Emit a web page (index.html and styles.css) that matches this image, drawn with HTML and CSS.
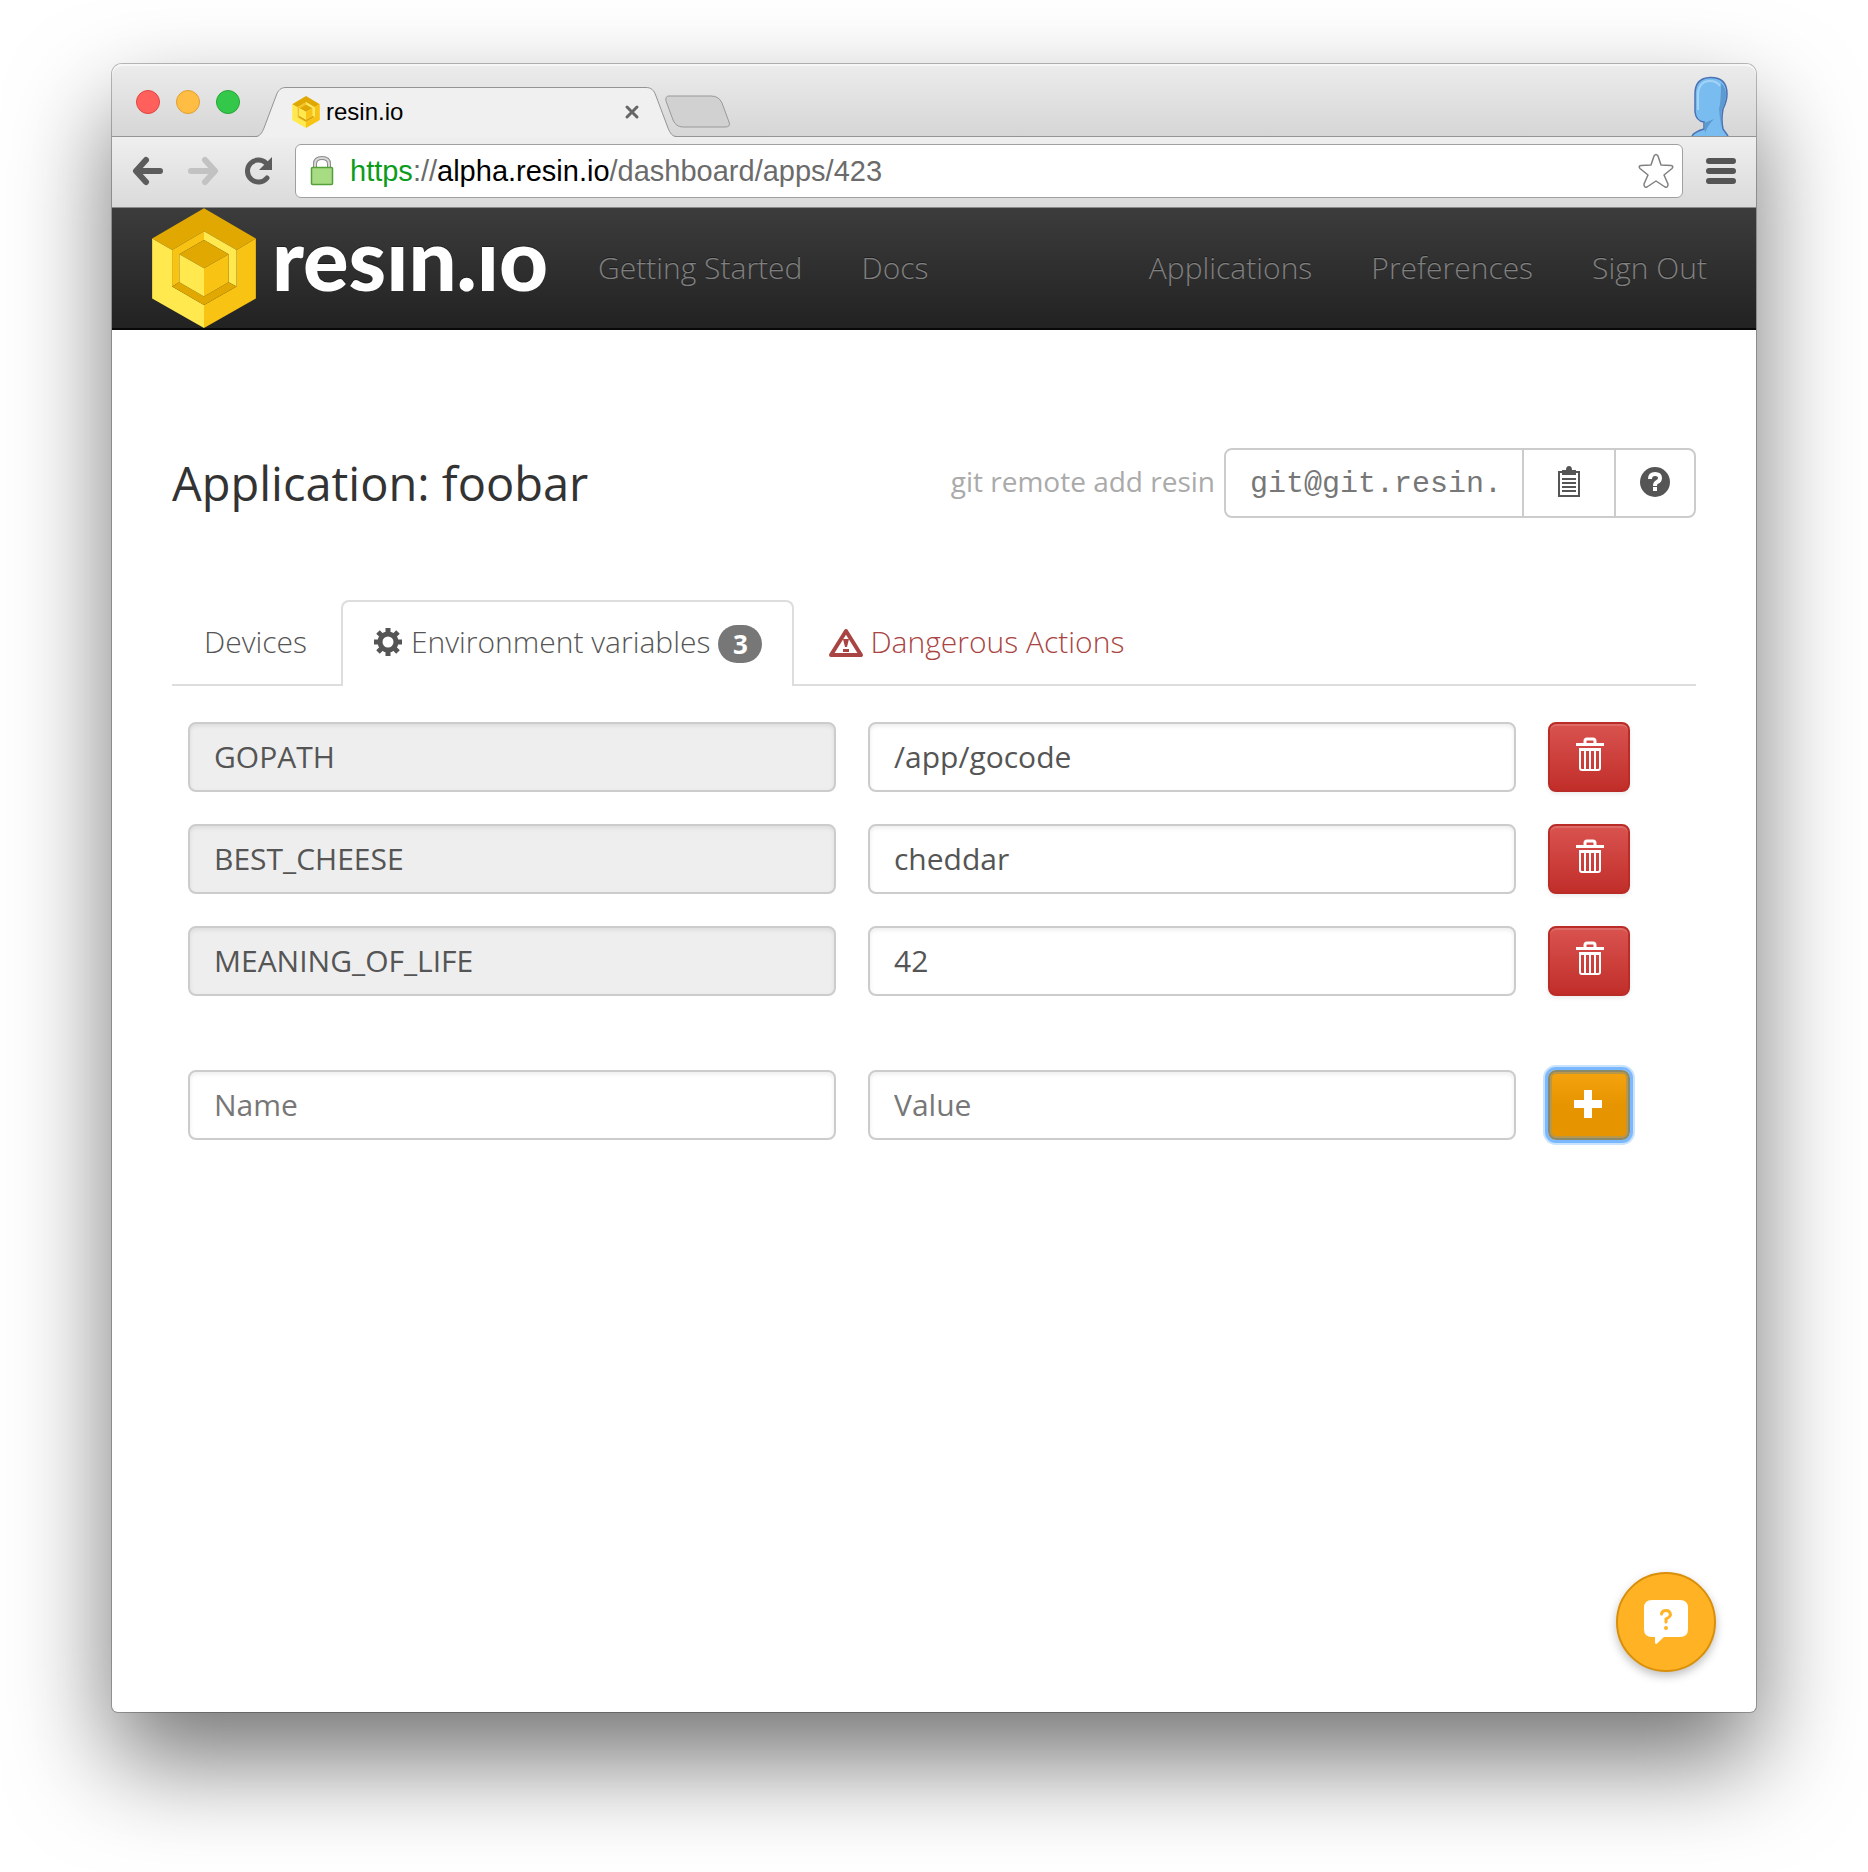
FILE: index.html
```html
<!DOCTYPE html>
<html lang="en">
<head>
<meta charset="utf-8">
<title>resin.io</title>
<link rel="stylesheet" href="styles.css">
</head>
<body>
<svg class="sprite" aria-hidden="true">
  <symbol id="cube" viewBox="156 473 312 361">
    <path fill="#e0a800" d="M156 565 312 474 468 565 410 599 312 543 216 599z"/>
    <path fill="#ffe94f" d="M156 565 216 599V709L312 765V834L156 745z"/>
    <path fill="#f9c313" d="M468 565 410 599V709L312 765V834L468 745z"/>
    <path fill="#f9c313" d="M312 543V569L238 612V696L216 709V599z"/>
    <path fill="#ffe94f" d="M312 543 410 599V709L386 696V612L312 569z"/>
    <path fill="#e0a800" d="M216 709 238 696 312 739 386 696 410 709 312 765zM312 569 386 612 312 654 238 612z"/>
    <path fill="#ffe94f" d="M238 612 312 654V739L238 696z"/>
    <path fill="#f9c313" d="M386 612 312 654V739L386 696z"/>
  </symbol>
  <symbol id="trash" viewBox="0 0 28 36">
    <path fill="none" stroke="currentColor" stroke-width="3" d="M9 7V5Q9 3 11 3H17Q19 3 19 5V7"/>
    <path fill="none" stroke="currentColor" stroke-width="2" d="M4 13V32Q4 34 6 34H22Q24 34 24 32V13z"/>
    <path fill="currentColor" d="M0 7H28V10H0zM3 12H25V15H3zM8 14H10V33H8zM13 14H15V33H13zM18 14H20V33H18z"/>
  </symbol>
</svg>

<div class="window">
  <div class="tabstrip">
    <div class="lights"><i class="light red"></i><i class="light amber"></i><i class="light green"></i></div>
    <div class="tab">
      <svg class="cap" viewBox="0 0 30 50"><path fill="#f0f0f0" d="M0 50C4 49 6 46 8 41L20 9C22 3 25 .5 30 .5V50z"/><path fill="none" stroke="#949494" d="M0 49.500C4 49 6 46 8 41L20 9C22 3 25 .5 30 .5"/></svg>
      <div class="tab-body">
        <svg class="favicon"><use href="#cube"/></svg>
        <span class="tab-title">resin.io</span>
        <button class="plain" aria-label="Close tab"><svg width="16" height="16" viewBox="0 0 16 16"><path stroke="#666" stroke-width="3" stroke-linecap="round" d="M3 3 13 13M13 3 3 13"/></svg></button>
      </div>
      <svg class="cap" viewBox="0 0 30 50"><path fill="#f0f0f0" d="M30 50C26 49 24 46 22 41L10 9C8 3 5 .5 0 .5V50z"/><path fill="none" stroke="#949494" d="M30 49.500C26 49 24 46 22 41L10 9C8 3 5 .5 0 .5"/></svg>
    </div>
    <button class="plain newtab" aria-label="New tab"><svg width="66" height="34" viewBox="0 0 66 34"><path fill="#d1d1d1" stroke="#999" d="M4 1H46Q54 1 57 8L64 27Q66 32 60 32H18Q11 32 8 25L1 6Q0 1 4 1z"/></svg></button>
    <svg class="avatar" viewBox="0 0 40 60"><path fill="#79bdf0" stroke="#4a72b4" stroke-width="1.500" d="M2 60Q4 56 14 53V46Q6 45 5 36V18Q5 2 20 1.500Q37 1 37 18Q37 25 33 33Q31 44 33 53L38 60"/><path fill="#5d9ad0" d="M31 7Q36 12 36 19Q36 26 32 33Q30 42 31 53L29 33Q31 26 31 7zM14 47 24 43Q18 49 15 57z"/><path fill="none" stroke="#a3d3f7" stroke-width="2" d="M8 34V18Q9 5 20 5Q27 5 30 10"/></svg>
  </div>

  <div class="toolbar">
    <button class="plain" aria-label="Back"><svg width="32" height="30" viewBox="0 0 32 30"><path fill="none" stroke="#5c5c5c" stroke-width="6" stroke-linecap="round" stroke-linejoin="round" d="M14 4 4 15 14 26M5 15H28"/></svg></button>
    <button class="plain" aria-label="Forward"><svg width="32" height="30" viewBox="0 0 32 30"><path fill="none" stroke="#c2c2c2" stroke-width="6" stroke-linecap="round" stroke-linejoin="round" d="M18 4 28 15 18 26M27 15H4"/></svg></button>
    <button class="plain" aria-label="Reload"><svg width="30" height="30" viewBox="0 0 30 30"><path fill="none" stroke="#5c5c5c" stroke-width="5" stroke-linecap="round" d="M25 22A11 11 0 1 1 24 7"/><path fill="#5c5c5c" d="M30 1V14H17z"/></svg></button>
    <div class="address">
      <svg width="24" height="32" viewBox="0 0 24 32"><path fill="none" stroke="#8b8b8b" stroke-width="4" d="M5 14V9Q5 3 12 3T19 9V14"/><path fill="none" stroke="#d8d8d8" stroke-width="2" d="M5 14V9Q5 3 12 3T19 9V14"/><rect x="1.500" y="12.500" width="21" height="17" rx="1" fill="#a8dc84" stroke="#55a03a" stroke-width="1.500"/></svg>
      <span class="url"><span class="scheme">https</span>://<span class="host">alpha.resin.io</span>/dashboard/apps/423</span>
      <button class="plain" aria-label="Bookmark"><svg width="36" height="36" viewBox="0 0 36 36"><path fill="#fff" stroke="#808080" stroke-width="1.500" stroke-linejoin="round" d="M16 3Q18 0 20 3L23 12 33 12.500Q36 13 34 15.500L26 22 30 31Q30 35 27 34L18 28 9 34Q6 35 6 31L10 22 2 15.500Q0 13 3 12.500L13 12z"/></svg></button>
    </div>
    <button class="plain" aria-label="Menu"><svg width="30" height="28" viewBox="0 0 30 28"><path stroke="#555" stroke-width="6" stroke-linecap="round" d="M3 4H27M3 14H27M3 24H27"/></svg></button>
  </div>

  <nav class="navbar">
    <a class="brand" href="#"><svg class="brand-mark"><use href="#cube"/></svg><span class="brand-name">resın.ıo</span></a>
    <a href="#">Getting Started</a>
    <a href="#">Docs</a>
    <a class="push" href="#">Applications</a>
    <a href="#">Preferences</a>
    <a href="#">Sign Out</a>
  </nav>

  <main class="content">
    <header class="page-head">
      <h1>Application: foobar</h1>
      <div class="remote">
        <label for="remote">git remote add resin</label>
        <div class="group">
          <input id="remote" class="remote-input" value="git@git.resin." readonly>
          <button class="addon copy" aria-label="Copy"><svg width="24" height="32" viewBox="0 0 24 32"><path fill="none" stroke="#555" stroke-width="2" d="M2 6H22V30H2z"/><path fill="#555" d="M5 4H9Q9 0 12 0T15 4H19V9H5z"/><path stroke="#555" stroke-width="2" d="M5 13H19M5 17H19M5 21H19M5 25H19"/></svg></button>
          <button class="addon help" aria-label="Help"><svg width="30" height="30" viewBox="0 0 30 30"><circle cx="15" cy="15" r="15" fill="#555"/><path fill="none" stroke="#fff" stroke-width="4" d="M10 12Q10 7 15 7T20 11Q20 14 17 15Q15 16 15 19"/><path fill="#fff" d="M13 20H17V24H13z"/></svg></button>
        </div>
      </div>
    </header>

    <div class="tabs">
      <a href="#">Devices</a>
      <a class="active" href="#"><svg class="gear" viewBox="-15 -15 30 30"><path fill="none" stroke="#555" stroke-width="5" d="M0-14V14M-14 0H14M-10-10 10 10M10-10-10 10"/><circle r="8" fill="#fff" stroke="#555" stroke-width="5"/></svg>Environment variables<span class="badge">3</span></a>
      <a class="danger" href="#"><svg class="warn" viewBox="0 0 36 30"><path fill="none" stroke="#a94442" stroke-width="4" stroke-linejoin="round" d="M18 4 33 28H3z"/><path fill="#a94442" d="M15 12H21L19 20H17zM15 22H21V25H15z"/></svg>Dangerous Actions</a>
    </div>

    <form class="vars">
      <input class="field" aria-label="Variable name" value="GOPATH" disabled>
      <input class="field" aria-label="Variable value" value="/app/gocode">
      <button type="button" class="btn remove" aria-label="Delete"><svg width="28" height="36"><use href="#trash"/></svg></button>
      <input class="field" aria-label="Variable name" value="BEST_CHEESE" disabled>
      <input class="field" aria-label="Variable value" value="cheddar">
      <button type="button" class="btn remove" aria-label="Delete"><svg width="28" height="36"><use href="#trash"/></svg></button>
      <input class="field" aria-label="Variable name" value="MEANING_OF_LIFE" disabled>
      <input class="field" aria-label="Variable value" value="42">
      <button type="button" class="btn remove" aria-label="Delete"><svg width="28" height="36"><use href="#trash"/></svg></button>
    </form>
    <form class="vars new">
      <input class="field" aria-label="Name" placeholder="Name">
      <input class="field" aria-label="Value" placeholder="Value">
      <button type="button" class="btn add" aria-label="Add"><svg width="28" height="28" viewBox="0 0 28 28"><path fill="#fff" d="M10 0H18V10H28V18H18V28H10V18H0V10H10z"/></svg></button>
    </form>
  </main>

  <button class="chat" aria-label="Support"><svg width="44" height="44" viewBox="0 0 44 44"><path fill="#fff" d="M8 0H36Q44 0 44 8V29Q44 37 36 37H20L13 43.500Q11 45 11 42V37H8Q0 37 0 29V8Q0 0 8 0z"/><path fill="none" stroke="#ffb324" stroke-width="3" stroke-linecap="round" d="M17.500 14Q18 10.500 22 10.500T26.500 15Q26 17 22 19V22"/><circle cx="22" cy="28" r="2" fill="#ffb324"/></svg></button>
</div>
</body>
</html>
```

FILE: styles.css
```css
* { box-sizing: border-box; }

body {
  margin: 0;
  padding: 64px 112px 160px;
  background: #fff;
  color: #555;
  font: 30px/42px "Open Sans", sans-serif;
}

a { color: inherit; text-decoration: none; }
button, input { font: inherit; color: inherit; }
svg { display: block; flex: none; }
.sprite { position: absolute; width: 0; height: 0; }
.plain { display: flex; padding: 0; border: 0; background: none; }

.window {
  position: relative;
  min-height: calc(100vh - 224px);
  border-radius: 10px 10px 6px 6px;
  background: #fff;
  box-shadow: 0 0 0 1px rgba(0, 0, 0, .25), 0 48px 100px rgba(0, 0, 0, .55);
}

/* Browser chrome */
.tabstrip {
  display: flex;
  align-items: flex-end;
  height: 73px;
  padding: 0 26px 0 24px;
  border-bottom: 1px solid #949494;
  border-radius: 10px 10px 0 0;
  background: linear-gradient(#ececec, #d6d6d6);
  box-shadow: inset 0 2px 0 #f6f6f6;
}
.lights { display: flex; gap: 16px; margin: 0 16px 22px 0; }
.light { width: 24px; height: 24px; border: 1px solid; border-radius: 50%; }
.red { background: #ff605c; border-color: #e0443e; }
.amber { background: #ffbd44; border-color: #dfa030; }
.green { background: #34c84a; border-color: #25a537; }
.tab { display: flex; width: 420px; margin-bottom: -1px; }
.cap { width: 30px; height: 50px; }
.tab-body {
  display: flex;
  flex: 1;
  align-items: center;
  height: 50px;
  padding: 0 6px 2px;
  border-top: 1px solid #949494;
  background: #f0f0f0;
}
.favicon { width: 28px; height: 32px; margin-right: 6px; }
.tab-title { flex: 1; color: #000; font: 24px/32px "Liberation Sans", sans-serif; }
.newtab { margin: 0 auto 7px -11px; }
.avatar { width: 40px; height: 60px; }

.toolbar {
  display: flex;
  align-items: center;
  gap: 23px;
  height: 71px;
  padding: 0 20px 2px;
  border-bottom: 1px solid #8a8a8a;
  background: linear-gradient(#efefef, #dadada);
}
.address {
  display: flex;
  flex: 1;
  align-items: center;
  gap: 16px;
  height: 54px;
  padding: 0 8px 0 14px;
  border: 1px solid #a0a0a0;
  border-radius: 6px;
  background: #fff;
}
.url { flex: 1; color: #6b6b6b; font: 29px/34px "Liberation Sans", sans-serif; }
.scheme { color: #0b9c1c; }
.host { color: #000; }

/* Site navigation */
.navbar {
  display: flex;
  align-items: center;
  gap: 59px;
  height: 122px;
  padding: 0 49px 0 40px;
  border-bottom: 2px solid #080808;
  background: linear-gradient(#3c3c3c, #222);
  color: #808080;
  font-weight: 300;
  text-shadow: 0 -1px 0 rgba(0, 0, 0, .4);
}
.brand {
  display: flex;
  align-items: center;
  width: 387px;
  color: #fff;
  font: 900 85px/100px Lato, sans-serif;
}
.brand-mark { width: 104px; height: 120px; margin-right: 16px; }
.brand-name { padding-bottom: 20px; }
.push { margin-left: auto; }

/* Page */
.content { padding: 118px 60px 60px; }
.page-head { display: flex; align-items: center; justify-content: space-between; }
h1 { margin: 0; color: #333; font-size: 47px; font-weight: 400; line-height: 70px; }
.remote { display: flex; align-items: center; gap: 9px; color: #aaa; font-size: 28px; }
.remote label { padding-bottom: 4px; }
.group { display: flex; width: 472px; height: 70px; border: 2px solid #ccc; border-radius: 8px; }
.remote-input {
  flex: 1;
  min-width: 0;
  padding: 2px 24px 0;
  border: 0;
  border-radius: 8px;
  background: #fff;
  color: #777;
  font: 30px/42px "Liberation Mono", monospace;
}
.addon {
  display: flex;
  align-items: center;
  justify-content: center;
  padding: 0 0 2px;
  border: 0;
  border-left: 2px solid #ccc;
  background: none;
}
.copy { width: 92px; }
.help { width: 80px; }

.tabs {
  display: flex;
  gap: 2px;
  height: 86px;
  margin-top: 82px;
  border-bottom: 2px solid #ddd;
  font-weight: 300;
}
.tabs a {
  display: flex;
  align-items: center;
  height: 86px;
  padding: 0 30px 4px;
  border: 2px solid transparent;
  border-bottom: 0;
}
.tabs .active { border-color: #ddd; border-radius: 8px 8px 0 0; background: #fff; }
.tabs .danger { color: #a94442; }
.gear { width: 30px; height: 30px; margin-right: 8px; }
.warn { width: 36px; height: 30px; margin-right: 6px; }
.badge {
  width: 44px;
  height: 38px;
  margin: 4px 0 0 8px;
  border-radius: 20px;
  background: #777;
  color: #fff;
  font-size: 26px;
  font-weight: 700;
  line-height: 38px;
  text-align: center;
}

.vars {
  display: grid;
  grid-template-columns: 1fr 1fr 82px;
  gap: 32px;
  padding: 36px 66px 0 16px;
}
.new { padding-top: 74px; }
.field {
  width: 100%;
  height: 70px;
  padding: 0 24px 2px;
  border: 2px solid #ccc;
  border-radius: 8px;
  background: #fff;
  color: #555;
  box-shadow: inset 0 2px 4px rgba(0, 0, 0, .08);
}
.field:disabled { background: #eee; }
.field::placeholder { color: #777; opacity: 1; }
.btn {
  display: flex;
  align-items: center;
  justify-content: center;
  height: 70px;
  padding: 0 0 6px 2px;
  border: 2px solid #b92c28;
  border-radius: 8px;
  color: #fff;
}
.remove {
  background: linear-gradient(#d9534f, #c12e2a);
  box-shadow: inset 0 2px 0 rgba(255, 255, 255, .15), 0 2px 4px rgba(0, 0, 0, .08);
}
.add {
  padding: 0 2px 2px 0;
  border-color: #8a8a6a;
  background: linear-gradient(#f5a30f, #e69500 50%);
  box-shadow: inset 0 0 0 2px #b8964a, 0 0 0 3px #7ab8ff, 0 0 0 5px #c8e3fb;
}

.chat {
  position: absolute;
  right: 40px;
  bottom: 40px;
  display: flex;
  align-items: center;
  justify-content: center;
  width: 100px;
  height: 100px;
  padding: 0;
  border: 2px solid #d98f0a;
  border-radius: 50%;
  background: #ffb324;
  box-shadow: 0 4px 10px rgba(0, 0, 0, .25);
}
```
